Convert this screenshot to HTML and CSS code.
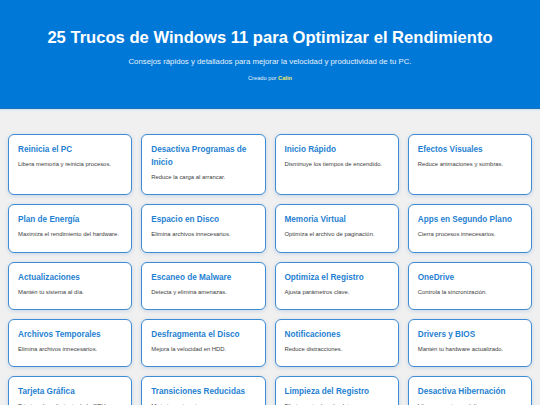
FILE: index.html
```html
<!DOCTYPE html>
<html lang="es">
<head>
<meta charset="utf-8">
<title>25 Trucos de Windows 11</title>
<link rel="stylesheet" href="styles.css">
</head>
<body>
<header class="hero">
  <h1 class="hero-title">25 Trucos de Windows 11 para Optimizar el Rendimiento</h1>
  <p class="hero-sub">Consejos rápidos y detallados para mejorar la velocidad y productividad de tu PC.</p>
  <p class="hero-credit">Creado por <span class="author">Calin</span></p>
</header>
<main class="grid">
  <div class="card"><h3>Reinicia el PC</h3><p>Libera memoria y reinicia procesos.</p></div>
  <div class="card"><h3>Desactiva Programas de Inicio</h3><p>Reduce la carga al arrancar.</p></div>
  <div class="card"><h3>Inicio Rápido</h3><p>Disminuye los tiempos de encendido.</p></div>
  <div class="card"><h3>Efectos Visuales</h3><p>Reduce animaciones y sombras.</p></div>
  <div class="card"><h3>Plan de Energía</h3><p>Maximiza el rendimiento del hardware.</p></div>
  <div class="card"><h3>Espacio en Disco</h3><p>Elimina archivos innecesarios.</p></div>
  <div class="card"><h3>Memoria Virtual</h3><p>Optimiza el archivo de paginación.</p></div>
  <div class="card"><h3>Apps en Segundo Plano</h3><p>Cierra procesos innecesarios.</p></div>
  <div class="card"><h3>Actualizaciones</h3><p>Mantén tu sistema al día.</p></div>
  <div class="card"><h3>Escaneo de Malware</h3><p>Detecta y elimina amenazas.</p></div>
  <div class="card"><h3>Optimiza el Registro</h3><p>Ajusta parámetros clave.</p></div>
  <div class="card"><h3>OneDrive</h3><p>Controla la sincronización.</p></div>
  <div class="card"><h3>Archivos Temporales</h3><p>Elimina archivos innecesarios.</p></div>
  <div class="card"><h3>Desfragmenta el Disco</h3><p>Mejora la velocidad en HDD.</p></div>
  <div class="card"><h3>Notificaciones</h3><p>Reduce distracciones.</p></div>
  <div class="card"><h3>Drivers y BIOS</h3><p>Mantén tu hardware actualizado.</p></div>
  <div class="card"><h3>Tarjeta Gráfica</h3><p>Prioriza el rendimiento de la GPU.</p></div>
  <div class="card"><h3>Transiciones Reducidas</h3><p>Minimiza animaciones.</p></div>
  <div class="card"><h3>Limpieza del Registro</h3><p>Elimina entradas obsoletas.</p></div>
  <div class="card"><h3>Desactiva Hibernación</h3><p>Libera espacio en el disco.</p></div>
</main>
</body>
</html>
```

FILE: styles.css
```css
* { box-sizing: border-box; }
html, body {
  margin: 0;
  padding: 0;
  background: #f0f0f0;
  font-family: "Liberation Sans", Arial, sans-serif;
}
.hero {
  background: #0078d7;
  color: #ffffff;
  text-align: center;
  padding: 27px 10px 25px;
  box-shadow: 0 1px 0 #1a6fb8, 0 2px 2px rgba(120, 200, 255, 0.35);
}
.hero-title {
  margin: 0;
  font-size: 16.6px;
  line-height: 22px;
  font-weight: bold;
}
.hero-sub {
  margin: 7px 0 0;
  font-size: 7.8px;
  line-height: 12px;
  color: #e6f1fb;
}
.hero-credit {
  margin: 5px 0 0;
  font-size: 5.7px;
  line-height: 10px;
  color: #e6f1fb;
}
.author {
  color: #f3e96a;
  font-weight: bold;
}
.grid {
  display: grid;
  grid-template-columns: repeat(4, 1fr);
  gap: 9px;
  padding: 26px 8px 20px;
}
.card {
  background: #ffffff;
  border: 1.5px solid #3f8bd4;
  border-radius: 6px;
  padding: 8px 9px 12.3px;
  box-shadow: 0 1px 4px rgba(0, 90, 180, 0.18);
}
.card h3 {
  margin: 0 0 3px;
  font-size: 8.2px;
  line-height: 13px;
  font-weight: bold;
  color: #1f7fd1;
}
.card p {
  margin: 0;
  font-size: 5.9px;
  line-height: 10px;
  color: #3d3d3d;
}
```
